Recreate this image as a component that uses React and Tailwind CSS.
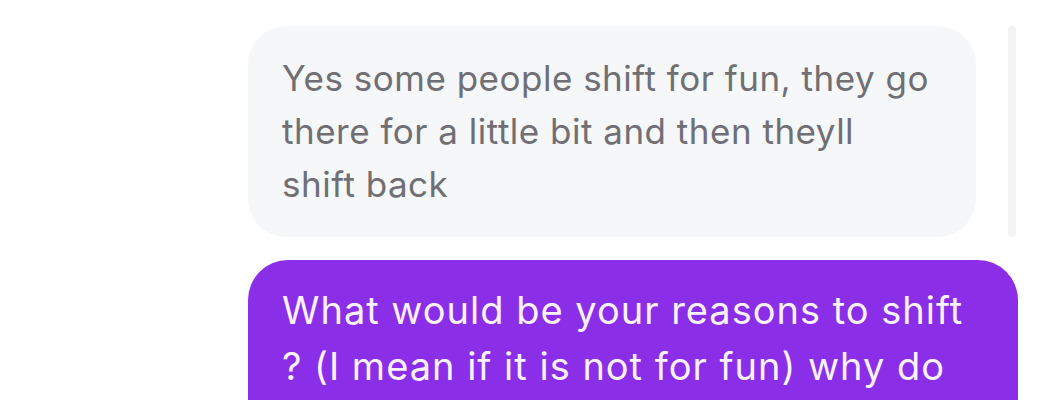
import React from "react";

const messages = [
  {
    id: 1,
    mine: false,
    text: "Yes some people shift for fun, they go there for a little bit and then theyll shift back",
  },
  {
    id: 2,
    mine: true,
    text: "What would be your reasons to shift ? (I mean if it is not for fun) why do you want to go there",
  },
];

function Bubble({ message }) {
  if (message.mine) {
    return (
      <div className="ml-[248px] w-[770px] rounded-[40px] bg-[#8b2ee8] pl-[34px] pr-[30px] pt-[22px] pb-[24px] text-[38px] leading-[56px] tracking-[1px] text-[#fbf2ff]">
        {message.text}
      </div>
    );
  }
  return (
    <div className="flex items-stretch">
      <div className="ml-[248px] w-[728px] rounded-[38px] bg-[#f6f7f9] pl-[34px] pr-[40px] py-[26px] text-[35px] leading-[53px] tracking-[0.5px] text-[#6f6f74]">
        {message.text}
      </div>
      <div className="ml-[32px] w-[8px] rounded-full bg-[#f3f3f5]" />
    </div>
  );
}

export default function App() {
  return (
    <div
      className="h-[400px] w-[1040px] overflow-hidden bg-white pt-[26px]"
      style={{ fontFamily: "Inter, 'Noto Sans', sans-serif" }}
    >
      <div className="flex flex-col gap-[23px]">
        {messages.map((m) => (
          <Bubble key={m.id} message={m} />
        ))}
      </div>
    </div>
  );
}
